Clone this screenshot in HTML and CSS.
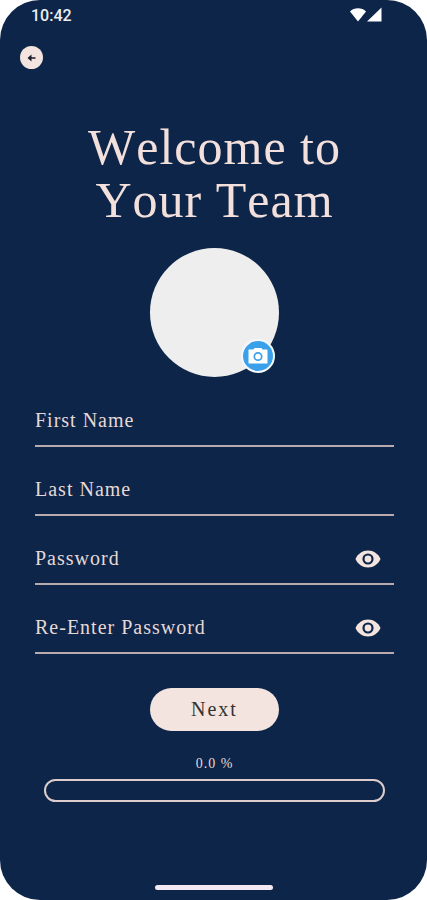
FILE: index.html
```
<!DOCTYPE html>
<html lang="en">
    <head>
        <meta charset="utf-8">
        <title>Welcome to Your Team</title>
        <meta name="viewport" content="width=device-width, initial-scale=1">
        <link rel="stylesheet" href="styles.css">
    </head>
    <body>
        <div class="screen">
            <div class="status-bar">
                <span>10:42</span>
                <svg class="status-icons" width="34" height="16" viewBox="0 0 34 16">
                    <path d="M1 4.5C5 .3 13 .3 17 4.5L9 14.5z"/>
                    <path d="M32.500 .5v14H18z"/>
                </svg>
            </div>

            <button class="back" type="button" aria-label="Back">
                <svg width="10" height="8" viewBox="0 0 10 8">
                    <path d="M4.500 .5v2.700H8.500v1.600H4.500v2.700L.5 4z"/>
                </svg>
            </button>

            <main>
                <h1>Welcome to<br>Your Team</h1>

                <div class="avatar">
                    <button class="camera" type="button" aria-label="Add photo">
                        <svg width="20" height="18" viewBox="0 0 20 18">
                            <path fill="#fff" d="M1 2.500H5.500L6.500 1h7l1 1.500h4.500q.5 0 .5.500v13q0 .5-.5.500h-18q-.5 0-.5-.5V3q0-.5.500-.5z"/>
                            <circle cx="10" cy="9.500" r="3.700" fill="none" stroke="#3ba0ea" stroke-width="1.700"/>
                        </svg>
                    </button>
                </div>

                <form>
                    <div class="field">
                        <label for="first-name">First Name</label>
                        <input type="text" id="first-name">
                    </div>
                    <div class="field">
                        <label for="last-name">Last Name</label>
                        <input type="text" id="last-name">
                    </div>
                    <div class="field">
                        <label for="password">Password</label>
                        <input type="password" id="password">
                        <button class="eye" type="button" aria-label="Show password">
                            <svg width="26" height="18" viewBox="0 0 26 18">
                                <path fill="#f3e4df" d="M.5 9C3 3.500 7.500.5 13 .5S23 3.500 25.500 9C23 14.500 18.500 17.500 13 17.500S3 14.500.5 9z"/>
                                <circle cx="13" cy="9" r="4.500" fill="none" stroke="#0c2548" stroke-width="2.200"/>
                            </svg>
                        </button>
                    </div>
                    <div class="field">
                        <label for="password-again">Re-Enter Password</label>
                        <input type="password" id="password-again">
                        <button class="eye" type="button" aria-label="Show password">
                            <svg width="26" height="18" viewBox="0 0 26 18">
                                <path fill="#f3e4df" d="M.5 9C3 3.500 7.500.5 13 .5S23 3.500 25.500 9C23 14.500 18.500 17.500 13 17.500S3 14.500.5 9z"/>
                                <circle cx="13" cy="9" r="4.500" fill="none" stroke="#0c2548" stroke-width="2.200"/>
                            </svg>
                        </button>
                    </div>

                    <button class="next" type="button">Next</button>

                    <label class="percent" for="progress">0.0 %</label>
                    <progress id="progress" max="100" value="0"></progress>
                </form>
            </main>

            <div class="home-bar"></div>
        </div>
    </body>
</html>
```
FILE: styles.css
```
* {
    box-sizing: border-box;
}

body {
    margin: 0;
    background: #fff;
    color: #f3e0dc;
    font-family: "Liberation Serif", serif;
}

.screen {
    display: flex;
    flex-direction: column;
    min-height: 100vh;
    background: #0c2548;
    border-radius: 40px;
}

button {
    padding: 0;
    border: 0;
    cursor: pointer;
}

svg {
    display: block;
}

.status-bar {
    display: flex;
    justify-content: space-between;
    align-items: center;
    height: 30px;
    padding: 0 44px 0 31px;
    color: #eee;
    font: 500 16px Roboto, sans-serif;
}

.status-icons {
    fill: #fff;
}

.back {
    display: flex;
    justify-content: center;
    align-items: center;
    width: 23px;
    height: 23px;
    margin: 16px 0 0 20px;
    border-radius: 50%;
    background: #f3e4df;
    fill: #1c1b2c;
}

main {
    padding: 52px 33px 0 35px;
}

h1 {
    margin: 0 0 21px;
    font-size: 50px;
    font-weight: normal;
    font-kerning: none;
    line-height: 53px;
    letter-spacing: 1px;
    text-align: center;
}

.avatar {
    position: relative;
    width: 129px;
    height: 129px;
    margin: 0 auto;
    border-radius: 50%;
    background: #eee;
}

/* sits over the edge of the avatar */
.camera {
    position: absolute;
    right: 4px;
    bottom: 4px;
    display: flex;
    justify-content: center;
    align-items: center;
    width: 34px;
    height: 34px;
    border: 2px solid #f5f8fb;
    border-radius: 50%;
    background: #3ba0ea;
}

form {
    display: flex;
    flex-direction: column;
    align-items: center;
    padding-top: 1px;
}

.field {
    display: flex;
    align-items: center;
    width: 100%;
    height: 69px;
    padding: 18px 13px 0 0;
    border-bottom: 2px solid #b9aaae;
}

.field label {
    color: #e6d8d6;
    font-size: 20px;
    letter-spacing: 1px;
}

.field input {
    flex: 1;
    min-width: 0;
    border: 0;
    outline: 0;
    background: none;
    color: inherit;
    font: inherit;
}

.eye {
    background: none;
}

.next {
    width: 129px;
    height: 43px;
    margin-top: 34px;
    border-radius: 22px;
    background: #f3e4df;
    color: #333;
    font-family: inherit;
    font-size: 20px;
    letter-spacing: 2px;
}

.percent {
    margin: 25px 0 7px;
    color: #e6d8d6;
    font-size: 14px;
    line-height: 16px;
    letter-spacing: 1px;
}

progress {
    appearance: none;
    width: 95%;
    height: 23px;
    border: 2px solid #dccdcc;
    border-radius: 12px;
    background: none;
    overflow: hidden;
}

progress::-webkit-progress-bar {
    background: none;
}

progress::-webkit-progress-value {
    background: #f3e4df;
}

.home-bar {
    width: 118px;
    height: 5px;
    margin: auto auto 10px;
    border-radius: 3px;
    background: #f3e9f2;
}
```
